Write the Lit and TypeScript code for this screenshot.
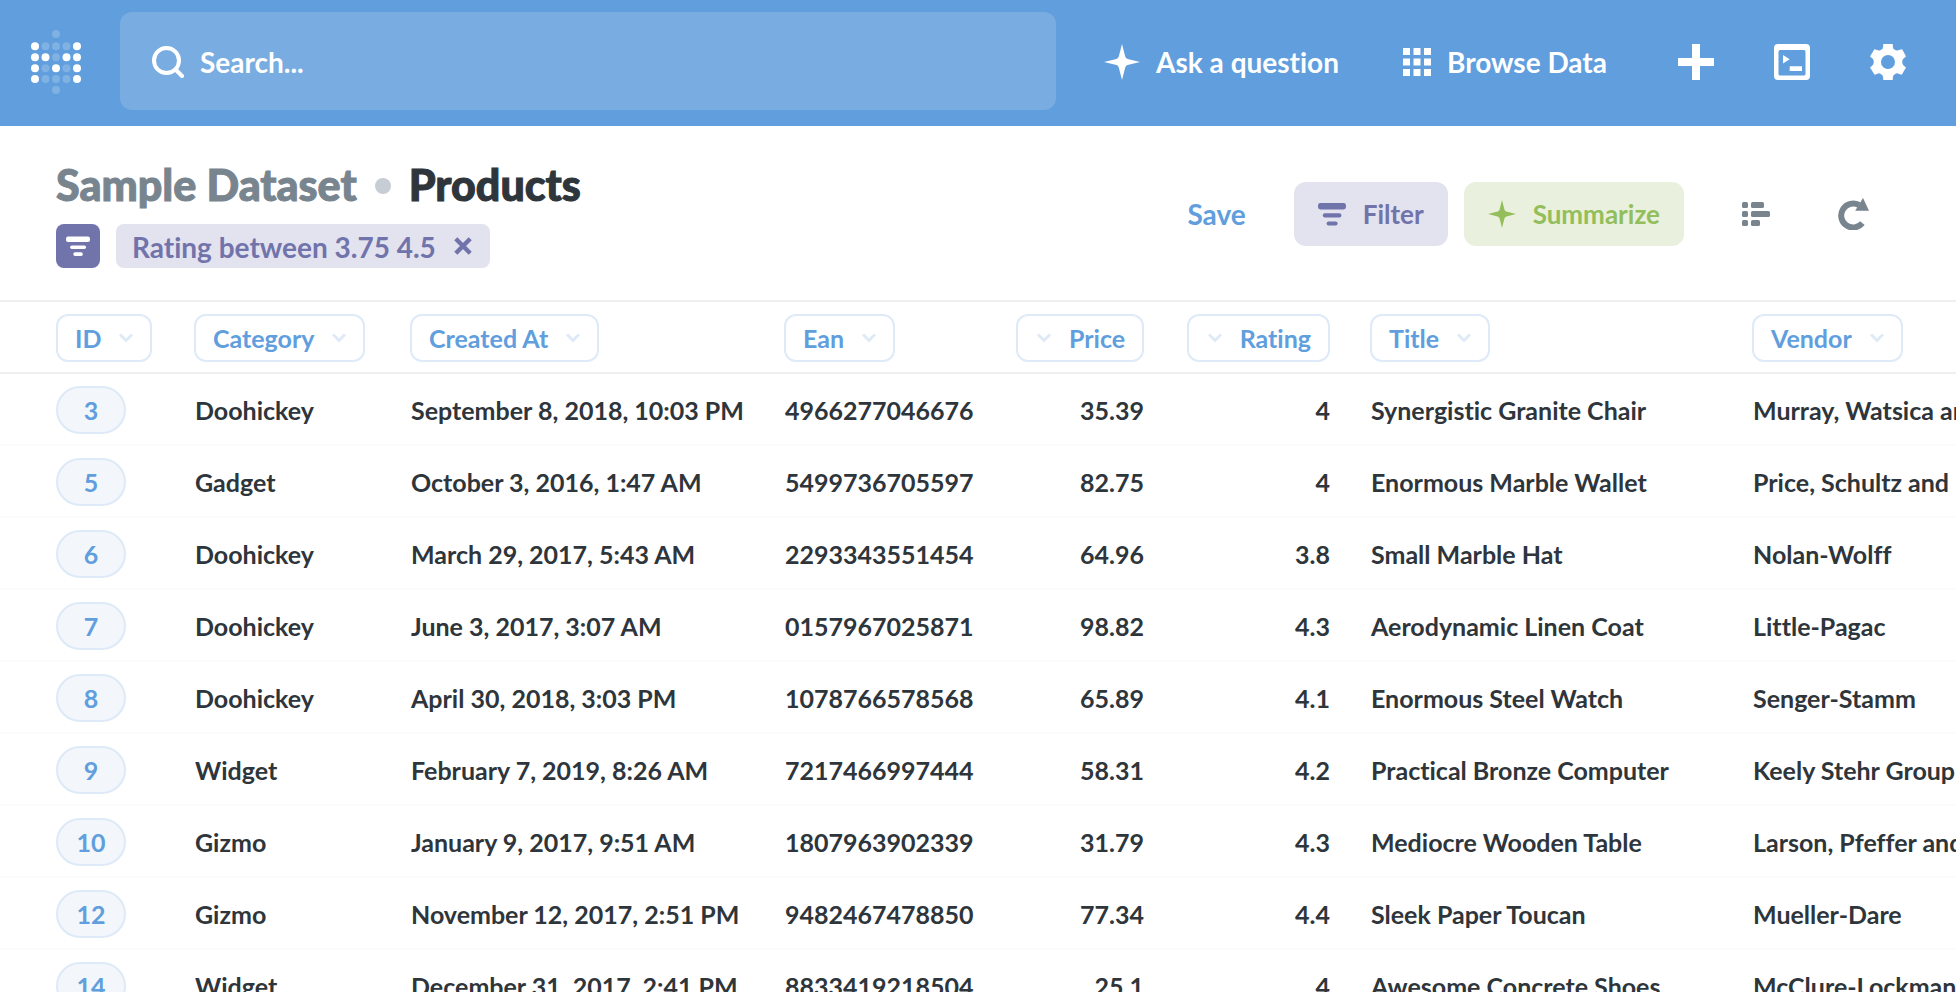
import { LitElement, html, css, svg } from "lit";
import { customElement } from "lit/decorators.js";
import { classMap } from "lit/directives/class-map.js";

interface Column {
  name: string;
  width?: number;
  numeric?: boolean;
}

const COLUMNS: Column[] = [
  { name: "ID", width: 174 },
  { name: "Category", width: 216 },
  { name: "Created At", width: 374 },
  { name: "Ean", width: 232 },
  { name: "Price", width: 168, numeric: true },
  { name: "Rating", width: 186, numeric: true },
  { name: "Title", width: 382 },
  { name: "Vendor" },
];

const ROWS: string[][] = [
  ["3", "Doohickey", "September 8, 2018, 10:03 PM", "4966277046676", "35.39", "4", "Synergistic Granite Chair", "Murray, Watsica and Wunsch"],
  ["5", "Gadget", "October 3, 2016, 1:47 AM", "5499736705597", "82.75", "4", "Enormous Marble Wallet", "Price, Schultz and Daniel"],
  ["6", "Doohickey", "March 29, 2017, 5:43 AM", "2293343551454", "64.96", "3.8", "Small Marble Hat", "Nolan-Wolff"],
  ["7", "Doohickey", "June 3, 2017, 3:07 AM", "0157967025871", "98.82", "4.3", "Aerodynamic Linen Coat", "Little-Pagac"],
  ["8", "Doohickey", "April 30, 2018, 3:03 PM", "1078766578568", "65.89", "4.1", "Enormous Steel Watch", "Senger-Stamm"],
  ["9", "Widget", "February 7, 2019, 8:26 AM", "7217466997444", "58.31", "4.2", "Practical Bronze Computer", "Keely Stehr Group"],
  ["10", "Gizmo", "January 9, 2017, 9:51 AM", "1807963902339", "31.79", "4.3", "Mediocre Wooden Table", "Larson, Pfeffer and Klocko"],
  ["12", "Gizmo", "November 12, 2017, 2:51 PM", "9482467478850", "77.34", "4.4", "Sleek Paper Toucan", "Mueller-Dare"],
  ["14", "Widget", "December 31, 2017, 2:41 PM", "8833419218504", "25.1", "4", "Awesome Concrete Shoes", "McClure-Lockman"],
];

/* Dot matrix of the logo: 1 is a lit dot, 0 a faint one, a space is empty. */
const LOGO = ["  0  ", "10001", "11011", "10101", "10001", "  0  "];
const LOGO_X = [4, 14.5, 25, 35.5, 46];
const LOGO_Y = [4, 16.3, 27.3, 38.2, 49.1, 60];

const logo = html`<svg width="50" height="64" viewBox="0 0 50 64" fill="#fff" aria-hidden="true">
  ${LOGO.map((line, r) =>
    [...line].map((c, i) =>
      c === " " ? null : svg`<circle cx=${LOGO_X[i]} cy=${LOGO_Y[r]} r="4" opacity=${c === "1" ? 1 : 0.2}></circle>`
    )
  )}
</svg>`;

const sparkle = (size: number) => html`<svg width=${size} height=${size} viewBox="0 0 36 36" fill="currentColor" aria-hidden="true">
  <path d="M18 0L21.2 12.6Q21.8 14.4 23.6 14.9L36 18L23.6 21.1Q21.8 21.6 21.2 23.4L18 36L14.8 23.4Q14.2 21.6 12.4 21.1L0 18L12.4 14.9Q14.2 14.4 14.8 12.6Z" />
</svg>`;

const filterIcon = (size: number) => html`<svg width=${size} height=${size} viewBox="0 0 28 28" fill="currentColor" aria-hidden="true">
  <rect x="0" y="3" width="28" height="6.4" rx="2.4" />
  <rect x="4.8" y="13.3" width="18.6" height="4.2" rx="2" />
  <rect x="8.6" y="21.4" width="11" height="4.2" rx="2" />
</svg>`;

const searchIcon = html`<svg width="32" height="32" viewBox="0 0 32 32" fill="none" stroke="currentColor" stroke-width="4" aria-hidden="true">
  <circle cx="14.5" cy="14.5" r="12.5" />
  <path d="M23.5 23.5L30 30" stroke-linecap="round" />
</svg>`;

const gridIcon = html`<svg width="28" height="28" viewBox="0 0 28 28" fill="currentColor" aria-hidden="true">
  ${[0, 10.5, 21].map((y) => [0, 10.5, 21].map((x) => svg`<rect x=${x} y=${y} width="7" height="7"></rect>`))}
</svg>`;

const plusIcon = html`<svg width="36" height="36" viewBox="0 0 36 36" fill="currentColor" aria-hidden="true">
  <path d="M14 0h8v14h14v8H22v14h-8V22H0v-8h14z" />
</svg>`;

const sqlIcon = html`<svg width="36" height="36" viewBox="0 0 36 36" fill="currentColor" aria-hidden="true">
  <path fill-rule="evenodd" d="M4 0H32Q36 0 36 4V32Q36 36 32 36H4Q0 36 0 32V4Q0 0 4 0ZM6 6Q4.5 6 4.5 8V30Q4.5 31.5 6 31.5H30Q31.5 31.5 31.5 30V8Q31.5 6 30 6Z" />
  <path d="M9 11L15.7 15.2L9 19.4ZM15.7 22.3H28V27H15.7Z" />
</svg>`;

const gearIcon = html`<svg width="36" height="36" viewBox="0 0 36 36" fill="currentColor" aria-hidden="true">
  <path fill-rule="evenodd" d="M13.2 0H22.8V2.6Q22.8 5.2 25.2 5.9Q27.4 6.9 29 6L32.2 5.2L36 12.6L33.8 14.2Q32.2 15.4 32.2 18Q32.2 20.6 33.8 21.8L36 23.4L31.8 30.8L29 30Q27 28.6 25.2 30Q22.8 31.2 22.8 33.4V36H13.2V33.4Q13.2 31.2 10.8 30Q9 28.6 7 30L4.6 30.8L0 23.4L2.2 21.8Q3.8 20.6 3.8 18Q3.8 15.4 2.2 14.2L0 12.6L4.4 5.2L7 6Q8.6 6.9 10.8 5.9Q13.2 5.2 13.2 2.6ZM18 11A7 7 0 1 0 18 25A7 7 0 1 0 18 11Z" />
</svg>`;

const closeIcon = html`<svg width="18" height="18" viewBox="0 0 18 18" stroke="currentColor" stroke-width="4.4" aria-hidden="true">
  <path d="M1.8 1.8L16.2 16.2M16.2 1.8L1.8 16.2" />
</svg>`;

const listIcon = html`<svg width="28" height="26" viewBox="0 0 28 26" fill="currentColor" aria-hidden="true">
  <rect x="0" y="1" width="6" height="6" rx="1.6" /><rect x="9" y="1" width="13" height="6" rx="1.6" />
  <rect x="0" y="10" width="6" height="6" rx="1.6" /><rect x="9" y="10" width="19" height="6" rx="1.6" />
  <rect x="0" y="19" width="6" height="6" rx="1.6" /><rect x="9" y="19" width="9" height="6" rx="1.6" />
</svg>`;

const refreshIcon = html`<svg width="32" height="32" viewBox="0 0 32 32" aria-hidden="true">
  <path d="M21 7A12 12 0 1 0 24.4 25.2" fill="none" stroke="currentColor" stroke-width="6" />
  <path d="M25 0L31 12.8H17.2Z" fill="currentColor" />
</svg>`;

const chevron = html`<svg class="chevron" width="14" height="10" viewBox="0 0 14 10" fill="none" stroke="currentColor" stroke-width="3" aria-hidden="true">
  <path d="M1 1.5L7 7.5L13 1.5" />
</svg>`;

@customElement("app-nav")
class AppNav extends LitElement {
  static styles = css`
    :host {
      display: block;
      flex: none;
      background: #609edd;
      color: #fff;
    }
    .nav {
      display: flex;
      align-items: center;
      padding: 12px 50px 16px 31px;
    }
    .home {
      display: flex;
      margin-right: 39px;
      padding-top: 2px;
    }
    a {
      color: inherit;
      text-decoration: none;
    }
    svg {
      display: block;
      flex: none;
    }
    .search {
      display: flex;
      align-items: center;
      gap: 16px;
      flex: 1;
      min-width: 0;
      height: 98px;
      box-sizing: border-box;
      padding: 2px 32px 0;
      border-radius: 12px;
      background: #79ade1;
    }
    .field {
      flex: 1;
      min-width: 0;
      padding: 0;
      border: 0;
      outline: 0;
      background: none;
      color: #fff;
      font: inherit;
    }
    .field::placeholder {
      color: #fff;
      opacity: 1;
    }
    .links {
      display: flex;
      align-items: center;
      gap: 64px;
      margin: 0 71px 0 48px;
      padding-top: 2px;
    }
    .link {
      display: flex;
      align-items: center;
      gap: 16px;
      white-space: nowrap;
    }
    .tools {
      display: flex;
      gap: 60px;
      padding-top: 2px;
    }
    .tool {
      padding: 0;
      border: 0;
      background: none;
      color: inherit;
      cursor: pointer;
    }
  `;

  render() {
    return html`<nav class="nav">
      <a class="home" href="#" aria-label="Home">${logo}</a>
      <label class="search">${searchIcon}<input class="field" type="text" aria-label="Search" placeholder="Search..." /></label>
      <div class="links">
        <a class="link" href="#ask">${sparkle(36)}<span>Ask a question</span></a>
        <a class="link" href="#browse">${gridIcon}<span>Browse Data</span></a>
      </div>
      <div class="tools">
        <button class="tool" aria-label="Create">${plusIcon}</button>
        <button class="tool" aria-label="Write SQL">${sqlIcon}</button>
        <button class="tool" aria-label="Settings">${gearIcon}</button>
      </div>
    </nav>`;
  }
}

@customElement("question-header")
class QuestionHeader extends LitElement {
  static styles = css`
    :host {
      display: block;
      flex: none;
    }
    .header {
      display: flex;
      align-items: center;
      justify-content: space-between;
      padding: 34px 86px 32px 56px;
    }
    .title {
      display: flex;
      align-items: center;
      gap: 18px;
      margin: 0 0 12px;
      font-size: 43px;
      line-height: 52px;
      font-weight: 900;
      white-space: nowrap;
      -webkit-text-stroke: 1px currentColor;
    }
    .part {
      padding-bottom: 2px;
      line-height: 50px;
    }
    .parent {
      color: #78858f;
      text-decoration: none;
    }
    .dot {
      width: 16px;
      height: 16px;
      border-radius: 50%;
      background: #c7cdd4;
    }
    .filters {
      display: flex;
      gap: 16px;
    }
    button {
      display: flex;
      align-items: center;
      padding: 0;
      border: 0;
      background: none;
      color: inherit;
      font: inherit;
      cursor: pointer;
    }
    svg {
      display: block;
      flex: none;
    }
    .badge {
      justify-content: center;
      width: 44px;
      height: 44px;
      border-radius: 8px;
      background: #7173ab;
      color: #fff;
    }
    .chip {
      display: flex;
      align-items: center;
      gap: 18px;
      height: 44px;
      padding: 0 18px 0 16px;
      border-radius: 8px;
      background: #e3e2ef;
      color: #7173ab;
      white-space: nowrap;
    }
    .label {
      padding-top: 2px;
    }
    .actions {
      display: flex;
      align-items: center;
    }
    .save {
      margin-right: 48px;
      color: #609edd;
    }
    .action {
      gap: 17px;
      height: 64px;
      margin-right: 16px;
      padding: 0 24px;
      border-radius: 12px;
      font-size: 26px;
    }
    .filter {
      background: #e3e2ef;
      color: #7173ab;
    }
    .summarize {
      background: #e9f0de;
      color: #93be5b;
    }
    .view {
      gap: 68px;
      display: flex;
      align-items: center;
      margin-left: 42px;
      color: #78858f;
    }
  `;

  render() {
    return html`<header class="header">
      <div>
        <h1 class="title">
          <a class="part parent" href="#dataset">Sample Dataset</a><span class="dot"></span><span class="part">Products</span>
        </h1>
        <div class="filters">
          <button class="badge" aria-label="Toggle filters">${filterIcon(24)}</button>
          <div class="chip"><span class="label">Rating between 3.75 4.5</span><button aria-label="Remove filter">${closeIcon}</button></div>
        </div>
      </div>
      <div class="actions">
        <button class="save">Save</button>
        <button class="action filter">${filterIcon(28)}<span>Filter</span></button>
        <button class="action summarize">${sparkle(28)}<span>Summarize</span></button>
        <div class="view">
          <button aria-label="Show editor">${listIcon}</button>
          <button aria-label="Refresh">${refreshIcon}</button>
        </div>
      </div>
    </header>`;
  }
}

@customElement("data-grid")
class DataGrid extends LitElement {
  static styles = css`
    :host {
      display: block;
      flex: 1;
      min-height: 0;
      overflow: hidden;
      border-top: 2px solid #eeeff0;
      font-size: 25px;
      line-height: 30px;
    }
    .table {
      width: 100%;
      table-layout: fixed;
      border-collapse: separate;
      border-spacing: 0;
    }
    .cell {
      box-sizing: border-box;
      height: 72px;
      padding: 12px 18px 10px 21px;
      border-bottom: 2px solid #fafbfb;
      border-right: 2px solid #fff;
      text-align: left;
      vertical-align: middle;
      white-space: nowrap;
      font-weight: inherit;
    }
    .heading {
      border-bottom-color: #eeeff0;
      border-right: 0;
      padding-left: 20px;
      padding-right: 20px;
    }
    .cell:first-child {
      padding-left: 56px;
    }
    .numeric {
      text-align: right;
    }
    .column {
      display: inline-flex;
      align-items: center;
      gap: 18px;
      height: 48px;
      padding: 0 17px;
      border: 2px solid #deeaf8;
      border-radius: 12px;
      background: #fff;
      color: #609edd;
      font: inherit;
      vertical-align: top;
      cursor: pointer;
    }
    .numeric .column {
      flex-direction: row-reverse;
      padding-left: 19px;
    }
    .chevron {
      display: block;
      color: #deeaf8;
    }
    .id {
      display: flex;
      align-items: center;
      justify-content: center;
      box-sizing: border-box;
      width: 70px;
      height: 48px;
      border: 2px solid #deeaf8;
      border-radius: 24px;
      background: #f3f6fb;
      color: #609edd;
      text-decoration: none;
    }
  `;

  render() {
    return html`<table class="table">
      <colgroup>
        ${COLUMNS.map((c) => (c.width ? html`<col width=${c.width} />` : html`<col />`))}
      </colgroup>
      <thead>
        <tr>
          ${COLUMNS.map(
            (c) => html`<th scope="col" class=${classMap({ cell: true, heading: true, numeric: !!c.numeric })}>
              <button class="column"><span>${c.name}</span>${chevron}</button>
            </th>`
          )}
        </tr>
      </thead>
      <tbody>
        ${ROWS.map(
          (row) => html`<tr>
            ${row.map(
              (value, i) => html`<td class=${classMap({ cell: true, numeric: !!COLUMNS[i].numeric })}>${i === 0
                ? html`<a class="id" href="#${value}">${value}</a>`
                : value}</td>`
            )}
          </tr>`
        )}
      </tbody>
    </table>`;
  }
}

@customElement("app-root")
class AppRoot extends LitElement {
  static styles = css`
    :host {
      display: flex;
      flex-direction: column;
      height: 100vh;
      overflow: hidden;
      background: #fff;
      color: #2e353b;
      font: 700 28px/34px Lato, sans-serif;
      font-variant-ligatures: no-common-ligatures;
    }
  `;

  render() {
    return html`<app-nav></app-nav><question-header></question-header><data-grid></data-grid>`;
  }
}
